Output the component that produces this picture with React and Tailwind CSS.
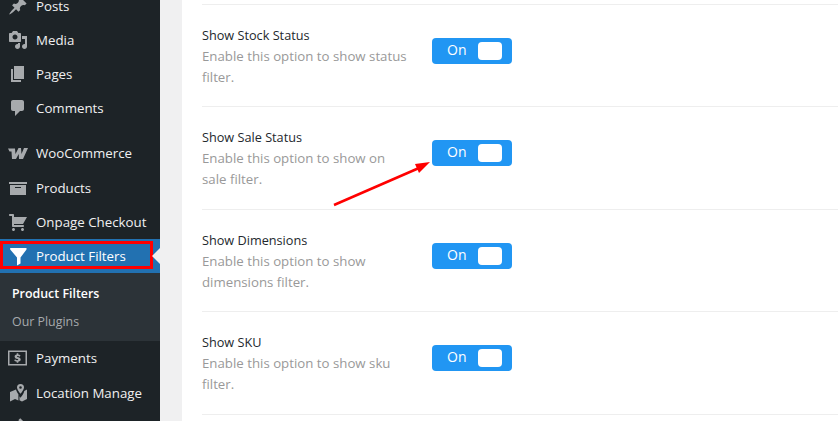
const Dash = ({ d, className = "fill-[#a7aaad]" }) => (
  <svg viewBox="0 0 20 20" className={`w-5 h-5 ${className}`}>
    <path d={d} fillRule="evenodd" />
  </svg>
);

const icons = {
  post: "M10.44 3.02l1.82-1.82 6.36 6.35-1.83 1.82c-1.05-.68-2.48-.57-3.41.36l-.75.75c-.92.93-1.04 2.35-.35 3.41l-1.83 1.82-2.41-2.41-2.8 2.79c-.42.42-3.38 2.71-3.8 2.29s1.86-3.39 2.28-3.81l2.79-2.79L4.1 9.36l1.83-1.82c1.05.69 2.48.57 3.4-.36l.75-.75c.93-.92 1.05-2.35.36-3.41z",
  media: "M13 11V4c0-.55-.45-1-1-1h-1.67L9 1H5L3.67 3H2c-.55 0-1 .45-1 1v7c0 .55.45 1 1 1h10c.55 0 1-.45 1-1zM7 4.5c1.38 0 2.5 1.12 2.5 2.5S8.38 9.5 7 9.5 4.5 8.38 4.5 7 5.62 4.5 7 4.5zM14 6h5v10.5c0 1.38-1.12 2.5-2.5 2.5S14 17.88 14 16.5s1.12-2.5 2.5-2.5c.17 0 .34.02.5.05V9h-3V6zm-4 8.05V13h2v3.5c0 1.38-1.12 2.5-2.5 2.5S7 17.88 7 16.5 8.12 14 9.5 14c.17 0 .34.02.5.05z",
  page: "M6 15V2h10v13H6zm-1 1h8v2H3V5h2v11z",
  comment: "M5 2h9c1.1 0 2 .9 2 2v7c0 1.1-.9 2-2 2h-2l-5 5v-5H5c-1.1 0-2-.9-2-2V4c0-1.1.9-2 2-2z",
  woo: "M0 5.500H7L7.500 11L10.500 5H13L13.500 11L16 5H20L15 16H11L10.700 11L8 16H4L3.500 8.500H1.500z",
  archive: "M19 4v2H1V4h18zM2 7h16v10H2V7zm11 3V9H7v1h6z",
  cart: "M6 13h9c.55 0 1 .45 1 1s-.45 1-1 1H5c-.55 0-1-.45-1-1V4H2c-.55 0-1-.45-1-1s.45-1 1-1h3c.55 0 1 .45 1 1v2h13l-4 7H6v1zm-.5 3c.83 0 1.5.67 1.5 1.5S6.33 19 5.500 19 4 18.33 4 17.5 4.67 16 5.5 16zm9 0c.83 0 1.5.67 1.5 1.5s-.67 1.5-1.5 1.5-1.5-.67-1.5-1.5.67-1.5 1.5-1.5z",
  funnel: "M2.200 2h16.300v1.500L12.500 11.500V17.500L9 19.500V11.500L2.200 3.500z",
  payment: "M0 2.500h19v15H0zM1.500 4v12h16V4zM8.700 5.300h1.600v1.200c.9.1 1.600.4 2.200.9l-.8 1.300c-.5-.4-1.200-.7-1.900-.7-.6 0-.9.2-.9.5 0 .9 3.800.4 3.800 3.100 0 1.100-.8 1.900-2.400 2.100v1H8.700v-1c-1-.1-1.900-.5-2.500-1.100l.8-1.300c.6.500 1.400.9 2.200.9.7 0 1.100-.2 1.100-.6 0-1-3.700-.4-3.700-3.100 0-1.100.8-1.900 2.100-2.100z",
  location: "M12.500 1a3.500 3.500 0 0 1 3.500 3.500c0 1.900-2.200 4.700-3.500 6.300C11.200 9.200 9 6.400 9 4.500A3.500 3.500 0 0 1 12.500 1zm0 2.200a1.300 1.300 0 1 0 0 2.600 1.300 1.300 0 0 0 0-2.600zM2 9l6-2.500c.4 1.600 1.500 3.400 2.400 4.700v6.300L7 16l-5 2.500zm17 -2.500L19 16l-5 2.500-2.500-1.300v-3.900l1 1.400c1-1.300 3.300-4.200 3.800-6.800z",
};

const topItems = [
  { label: "Posts", icon: "post" },
  { label: "Media", icon: "media" },
  { label: "Pages", icon: "page" },
  { label: "Comments", icon: "comment" },
];

const midItems = [
  { label: "WooCommerce", icon: "woo" },
  { label: "Products", icon: "archive" },
  { label: "Onpage Checkout", icon: "cart" },
];

const bottomItems = [
  { label: "Payments", icon: "payment" },
  { label: "Location Manage", icon: "location" },
];

const MenuItem = ({ label, icon }) => (
  <div className="h-[34px] flex items-center text-[#f0f0f1]">
    <span className="w-9 pl-2 shrink-0">
      <Dash d={icons[icon]} />
    </span>
    <span className="mt-[2px]">{label}</span>
  </div>
);

const rows = [
  { title: "Show Stock Status", lines: ["Enable this option to show status", "filter."], height: "h-[102px]" },
  { title: "Show Sale Status", lines: ["Enable this option to show on", "sale filter."], height: "h-[103px]" },
  { title: "Show Dimensions", lines: ["Enable this option to show", "dimensions filter."], height: "h-[102px]" },
  { title: "Show SKU", lines: ["Enable this option to show sku", "filter."], height: "h-[103px]" },
];

const Toggle = () => (
  <div className="w-20 h-[26px] rounded-[4px] bg-[#2196f3] flex items-center justify-between pl-[15px] pr-[10px] text-white text-[14px]">
    <span className="-mt-[3px]">On</span>
    <span className="w-6 h-[18px] rounded-[4px] bg-white" />
  </div>
);

export default function App() {
  return (
    <div className="relative w-[838px] h-[421px] overflow-hidden flex bg-[#f0f0f1] font-['Open_Sans',sans-serif]">
      <aside className="w-40 shrink-0 bg-[#1d2327] -mt-[11px] text-[13.3px]">
        {topItems.map((item) => (
          <MenuItem key={item.label} {...item} />
        ))}
        <div className="h-[11px]" />
        <div className="flex flex-col gap-[0.5px]">
          {midItems.map((item) => (
            <MenuItem key={item.label} {...item} />
          ))}
        </div>
        <div className="relative h-[34px] bg-[#2271b1] flex items-center text-white">
          <span className="w-9 pl-2 shrink-0">
            <Dash d={icons.funnel} className="fill-white" />
          </span>
          <span className="mt-[2px]">Product Filters</span>
          <span className="absolute left-0 top-[2px] w-[153px] h-[28px] border-[3px] border-[#ff0000]" />
          <span className="absolute right-0 top-[9px] border-y-[8px] border-r-[8px] border-y-transparent border-r-[#f0f0f1]" />
        </div>
        <div className="h-[68px] bg-[#2c3338] pt-[7px] text-[12.4px]">
          <div className="h-7 pl-3 flex items-center font-semibold text-white">Product Filters</div>
          <div className="h-7 pl-3 flex items-center text-[#a7aaad]">Our Plugins</div>
        </div>
        <div className="flex flex-col gap-[1px]">
          {bottomItems.map((item) => (
            <MenuItem key={item.label} {...item} />
          ))}
        </div>
        <div className="pl-2 pt-[7px]">
          <Dash d={icons.post} />
        </div>
      </aside>
      <main className="flex-1 ml-[22px] bg-white pl-5">
        <div className="h-[5px] border-b border-[#eeeeee]" />
        {rows.map((row) => (
          <div key={row.title} className={`${row.height} border-b border-[#eeeeee] flex pt-5`}>
            <div className="w-[230px] shrink-0">
              <div className="text-[#23282d] text-[12.7px] leading-5 font-medium">{row.title}</div>
              <div className="text-[#999999] text-[13.25px] leading-[21px] mt-[0.5px]">
                {row.lines.map((line) => (
                  <div key={line}>{line}</div>
                ))}
              </div>
            </div>
            <div className="pt-[13px]">
              <Toggle />
            </div>
          </div>
        ))}
      </main>
      {/* annotation arrow */}
      <svg viewBox="0 0 838 421" className="absolute inset-0 w-[838px] h-[421px] pointer-events-none">
        <path d="M334 205 L419 168" stroke="#ff0000" strokeWidth="2.5" fill="none" />
        <path d="M430 162 L415 164 L419 173 Z" fill="#ff0000" />
      </svg>
    </div>
  );
}
